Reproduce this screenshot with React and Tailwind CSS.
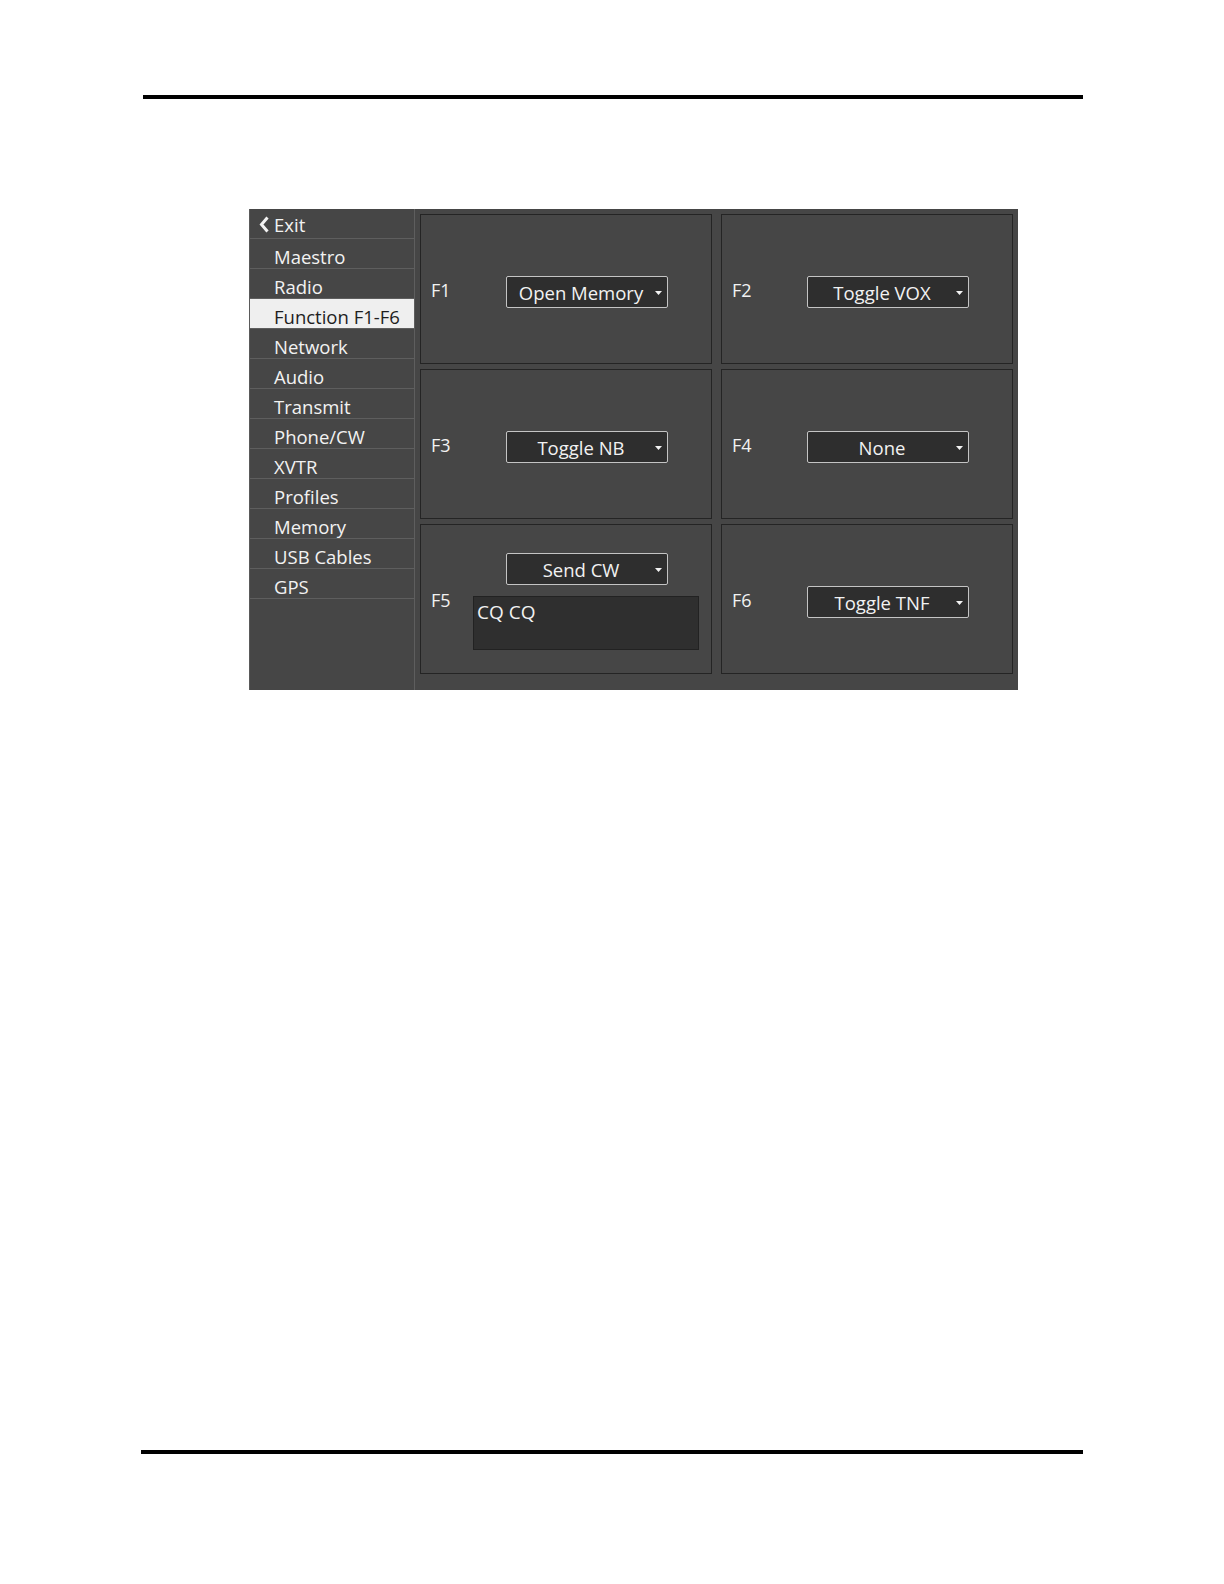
import React from 'react';

const menuItems = [
  'Maestro',
  'Radio',
  'Function F1-F6',
  'Network',
  'Audio',
  'Transmit',
  'Phone/CW',
  'XVTR',
  'Profiles',
  'Memory',
  'USB Cables',
  'GPS',
];

function Dropdown({ value }) {
  return (
    <div className="relative w-[162px] h-[32px] bg-[#2e2e2e] border border-[#c4c4c4] rounded-[2px] flex items-center justify-center pr-[12px] text-[18.5px] text-[#f2f2f2] leading-none">
      <span className="pt-[2px]">{value}</span>
      <svg className="absolute right-[5px] top-[14px]" width="7" height="4" viewBox="0 0 7 4">
        <path d="M0 0 L7 0 L3.5 4 Z" fill="#f2f2f2" />
      </svg>
    </div>
  );
}

function FunctionCard({ label, value, children }) {
  return (
    <div className="border border-[#242424] bg-[#464646] flex items-center">
      <div className="w-[85px] pl-[10px] pt-[2px] text-[18px] text-[#f2f2f2] leading-none">{label}</div>
      {children || (
        <div className="flex-1 pt-[6px]">
          <Dropdown value={value} />
        </div>
      )}
    </div>
  );
}

export default function App() {
  return (
    <div className="min-h-[1584px] bg-white pt-[95px] font-['Open_Sans','Noto_Sans',sans-serif]">
      {/* top rule */}
      <div className="ml-[143px] w-[940px] h-[4px] bg-black"></div>

      {/* settings panel */}
      <div className="mt-[110px] ml-[249px] w-[769px] h-[481px] bg-[#464646] flex border-l border-[#5a5a5a]">
        {/* Sidebar */}
        <div className="w-[165px] border-r border-[#5e5e5e] flex flex-col">
          <div className="h-[30px] border-b border-[#5e5e5e] flex items-center pl-[9px] text-[18.5px] text-[#f2f2f2]">
            <svg width="11" height="17" viewBox="0 0 11 17" className="mr-[4px] mt-[2px]">
              <path d="M8.5 1.5 L2.5 8.5 L8.5 15.5" stroke="#f2f2f2" strokeWidth="3" fill="none" />
            </svg>
            <span className="pt-[3px]">Exit</span>
          </div>
          {menuItems.map((item) => (
            <div
              key={item}
              className={
                item === 'Function F1-F6'
                  ? 'h-[30px] border-b border-[#5e5e5e] flex items-center pl-[24px] text-[18.5px] bg-[#efefef] text-[#1e1e1e]'
                  : 'h-[30px] border-b border-[#5e5e5e] flex items-center pl-[24px] text-[18.5px] text-[#f2f2f2]'
              }
            >
              <span className="pt-[6px]">{item}</span>
            </div>
          ))}
        </div>

        {/* Function keys */}
        <div className="flex-1 pt-[5px] px-[5px] pb-[16px] grid grid-cols-2 grid-rows-3 gap-x-[9px] gap-y-[5px]">
          <FunctionCard label="F1" value="Open Memory" />
          <FunctionCard label="F2" value="Toggle VOX" />
          <FunctionCard label="F3" value="Toggle NB" />
          <FunctionCard label="F4" value="None" />
          <FunctionCard label="F5">
            <div className="flex-1 self-start flex flex-col pt-[28px]">
              <Dropdown value="Send CW" />
              <div className="-ml-[33px] mt-[11px] w-[226px] h-[54px] bg-[#2f2f2f] border border-[#222] px-[3px] pt-[1px] text-[19px] text-[#f2f2f2]">
                CQ CQ
              </div>
            </div>
          </FunctionCard>
          <FunctionCard label="F6" value="Toggle TNF" />
        </div>
      </div>

      {/* bottom rule */}
      <div className="mt-[760px] ml-[141px] w-[942px] h-[4px] bg-black"></div>
    </div>
  );
}
